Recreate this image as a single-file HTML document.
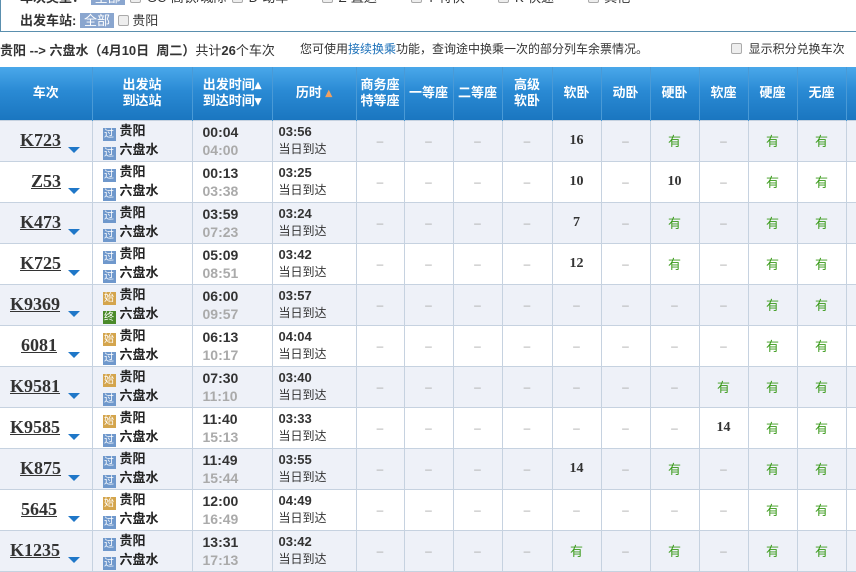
<!DOCTYPE html>
<html><head><meta charset="utf-8"><style>
*{margin:0;padding:0;box-sizing:border-box}
body{width:856px;height:572px;overflow:hidden;background:#fff;font-family:"Liberation Sans","Noto Sans CJK SC",sans-serif;font-size:12px;color:#333;position:relative}
.box{position:absolute;left:0;top:-10px;width:860px;height:42px;border:1px solid #5a8fae;border-top:none}
.topfrag{position:absolute;top:-13px;left:20px;font-size:13px;color:#333;white-space:nowrap;word-spacing:2px}
.cb{display:inline-block;width:11px;height:11px;border:1px solid #aaa;background:#eee;border-radius:2px;vertical-align:-1px}
.tag{display:inline-block;background:#8aa6cf;color:#fff;padding:0 4px;line-height:15px}
.t1{position:absolute;top:10px;left:20px;font-weight:bold;font-size:13px}
.info{position:absolute;top:40px;left:0;width:856px;font-size:13px}
table{position:absolute;top:67px;left:0;border-collapse:collapse;table-layout:fixed;width:856px}
th{height:53px;color:#fff;font-weight:bold;font-size:13px;line-height:16px;background:linear-gradient(#4aa8ea,#2a8ad4 45%,#1a76c0);border-left:1px solid #4a9ad6;text-align:center}
th:first-child{border-left:none}
td{height:41px;border:1px solid #c6d2e0;text-align:center;color:#aaa;font-size:12px}
tr.o td{background:#eef1f8}
tr.e td{background:#fff}
td.n{font-weight:bold;color:#333;font-family:"Liberation Serif",serif;font-size:14px}
td.y{color:#3a9a1a;font-size:13px}
.tn{font-family:"Liberation Serif",serif;font-weight:bold;font-size:18px;color:#333;text-decoration:underline;position:relative}
.ar{position:absolute;right:12px;top:26px;width:0;height:0;border-left:6px solid transparent;border-right:6px solid transparent;border-top:6px solid #1f77c8}
td.c1{position:relative;border-left:none;text-align:left;padding-left:0}
td.st{text-align:left;padding-left:10px;color:#222;line-height:17px;font-size:13px;font-weight:bold}
.ic{display:inline-block;width:13px;height:13px;font-size:10px;line-height:13px;text-align:center;color:#fff;margin-right:4px;vertical-align:-2px;font-weight:normal}
.g{background:#6f98cc}.s{background:#d4a54d}.z{background:#4a8a2a}
td.tm{text-align:left;padding-left:10px;font-family:"Liberation Sans",sans-serif;font-weight:bold;font-size:14px;line-height:18px;color:#333}
td.tm span{color:#aaa;display:block}
td.du{text-align:left;padding-left:6px;color:#333;line-height:17px;font-size:12px}
td.du b{font-size:13px}
</style></head><body>
<div class="box"></div>
<div class="topfrag"><b>车次类型：</b> <span class="tag">全部</span> <span class="cb"></span> GC-高铁/城际 <span class="cb"></span> D-动车 &nbsp;&nbsp;&nbsp;&nbsp; <span class="cb"></span> Z-直达 &nbsp;&nbsp;&nbsp;&nbsp; <span class="cb"></span> T-特快 &nbsp;&nbsp;&nbsp;&nbsp; <span class="cb"></span> K-快速 &nbsp;&nbsp;&nbsp;&nbsp; <span class="cb"></span> 其他</div>
<div class="t1">出发车站: <span class="tag" style="font-weight:normal">全部</span> <span class="cb"></span> <span style="font-weight:normal">贵阳</span></div>
<div class="info"><span style="position:absolute;left:0;font-weight:bold">贵阳 --&gt; 六盘水（4月10日&nbsp; 周二）<span style="font-weight:normal">共计</span>26<span style="font-weight:normal">个车次</span></span><span style="position:absolute;left:300px;font-size:12px">您可使用<span style="color:#1a6fb8">接续换乘</span>功能，查询途中换乘一次的部分列车余票情况。</span><span style="position:absolute;left:731px;font-size:12px"><span class="cb"></span>&nbsp; 显示积分兑换车次</span></div>
<table>
<colgroup><col style="width:92px"><col style="width:100px"><col style="width:80px"><col style="width:84px"><col style="width:48px"><col style="width:49px"><col style="width:49px"><col style="width:50px"><col style="width:49px"><col style="width:49px"><col style="width:49px"><col style="width:49px"><col style="width:49px"><col style="width:49px"><col style="width:10px"></colgroup>
<tr><th>车次</th><th>出发站<br>到达站</th><th>出发时间▴<br>到达时间▾</th><th>历时 <span style="color:#f0a060">▴</span></th><th>商务座<br>特等座</th><th>一等座</th><th>二等座</th><th>高级<br>软卧</th><th>软卧</th><th>动卧</th><th>硬卧</th><th>软座</th><th>硬座</th><th>无座</th><th></th></tr>
<tr class="o"><td class="c1"><span class="tn" style="margin-left:20px">K723</span><i class="ar"></i></td><td class="st"><span class="ic g">过</span>贵阳<br><span class="ic g">过</span>六盘水</td><td class="tm">00:04<span>04:00</span></td><td class="du"><b>03:56</b><br>当日到达</td><td>–</td><td>–</td><td>–</td><td>–</td><td class="n">16</td><td>–</td><td class="y">有</td><td>–</td><td class="y">有</td><td class="y">有</td><td></td></tr>
<tr class="e"><td class="c1"><span class="tn" style="margin-left:31px">Z53</span><i class="ar"></i></td><td class="st"><span class="ic g">过</span>贵阳<br><span class="ic g">过</span>六盘水</td><td class="tm">00:13<span>03:38</span></td><td class="du"><b>03:25</b><br>当日到达</td><td>–</td><td>–</td><td>–</td><td>–</td><td class="n">10</td><td>–</td><td class="n">10</td><td>–</td><td class="y">有</td><td class="y">有</td><td></td></tr>
<tr class="o"><td class="c1"><span class="tn" style="margin-left:20px">K473</span><i class="ar"></i></td><td class="st"><span class="ic g">过</span>贵阳<br><span class="ic g">过</span>六盘水</td><td class="tm">03:59<span>07:23</span></td><td class="du"><b>03:24</b><br>当日到达</td><td>–</td><td>–</td><td>–</td><td>–</td><td class="n">7</td><td>–</td><td class="y">有</td><td>–</td><td class="y">有</td><td class="y">有</td><td></td></tr>
<tr class="e"><td class="c1"><span class="tn" style="margin-left:20px">K725</span><i class="ar"></i></td><td class="st"><span class="ic g">过</span>贵阳<br><span class="ic g">过</span>六盘水</td><td class="tm">05:09<span>08:51</span></td><td class="du"><b>03:42</b><br>当日到达</td><td>–</td><td>–</td><td>–</td><td>–</td><td class="n">12</td><td>–</td><td class="y">有</td><td>–</td><td class="y">有</td><td class="y">有</td><td></td></tr>
<tr class="o"><td class="c1"><span class="tn" style="margin-left:10px">K9369</span><i class="ar"></i></td><td class="st"><span class="ic s">始</span>贵阳<br><span class="ic z">终</span>六盘水</td><td class="tm">06:00<span>09:57</span></td><td class="du"><b>03:57</b><br>当日到达</td><td>–</td><td>–</td><td>–</td><td>–</td><td>–</td><td>–</td><td>–</td><td>–</td><td class="y">有</td><td class="y">有</td><td></td></tr>
<tr class="e"><td class="c1"><span class="tn" style="margin-left:21px">6081</span><i class="ar"></i></td><td class="st"><span class="ic s">始</span>贵阳<br><span class="ic g">过</span>六盘水</td><td class="tm">06:13<span>10:17</span></td><td class="du"><b>04:04</b><br>当日到达</td><td>–</td><td>–</td><td>–</td><td>–</td><td>–</td><td>–</td><td>–</td><td>–</td><td class="y">有</td><td class="y">有</td><td></td></tr>
<tr class="o"><td class="c1"><span class="tn" style="margin-left:10px">K9581</span><i class="ar"></i></td><td class="st"><span class="ic s">始</span>贵阳<br><span class="ic g">过</span>六盘水</td><td class="tm">07:30<span>11:10</span></td><td class="du"><b>03:40</b><br>当日到达</td><td>–</td><td>–</td><td>–</td><td>–</td><td>–</td><td>–</td><td>–</td><td class="y">有</td><td class="y">有</td><td class="y">有</td><td></td></tr>
<tr class="e"><td class="c1"><span class="tn" style="margin-left:10px">K9585</span><i class="ar"></i></td><td class="st"><span class="ic s">始</span>贵阳<br><span class="ic g">过</span>六盘水</td><td class="tm">11:40<span>15:13</span></td><td class="du"><b>03:33</b><br>当日到达</td><td>–</td><td>–</td><td>–</td><td>–</td><td>–</td><td>–</td><td>–</td><td class="n">14</td><td class="y">有</td><td class="y">有</td><td></td></tr>
<tr class="o"><td class="c1"><span class="tn" style="margin-left:20px">K875</span><i class="ar"></i></td><td class="st"><span class="ic g">过</span>贵阳<br><span class="ic g">过</span>六盘水</td><td class="tm">11:49<span>15:44</span></td><td class="du"><b>03:55</b><br>当日到达</td><td>–</td><td>–</td><td>–</td><td>–</td><td class="n">14</td><td>–</td><td class="y">有</td><td>–</td><td class="y">有</td><td class="y">有</td><td></td></tr>
<tr class="e"><td class="c1"><span class="tn" style="margin-left:21px">5645</span><i class="ar"></i></td><td class="st"><span class="ic s">始</span>贵阳<br><span class="ic g">过</span>六盘水</td><td class="tm">12:00<span>16:49</span></td><td class="du"><b>04:49</b><br>当日到达</td><td>–</td><td>–</td><td>–</td><td>–</td><td>–</td><td>–</td><td>–</td><td>–</td><td class="y">有</td><td class="y">有</td><td></td></tr>
<tr class="o"><td class="c1"><span class="tn" style="margin-left:10px">K1235</span><i class="ar"></i></td><td class="st"><span class="ic g">过</span>贵阳<br><span class="ic g">过</span>六盘水</td><td class="tm">13:31<span>17:13</span></td><td class="du"><b>03:42</b><br>当日到达</td><td>–</td><td>–</td><td>–</td><td>–</td><td class="y">有</td><td>–</td><td class="y">有</td><td>–</td><td class="y">有</td><td class="y">有</td><td></td></tr>
</table>
</body></html>
